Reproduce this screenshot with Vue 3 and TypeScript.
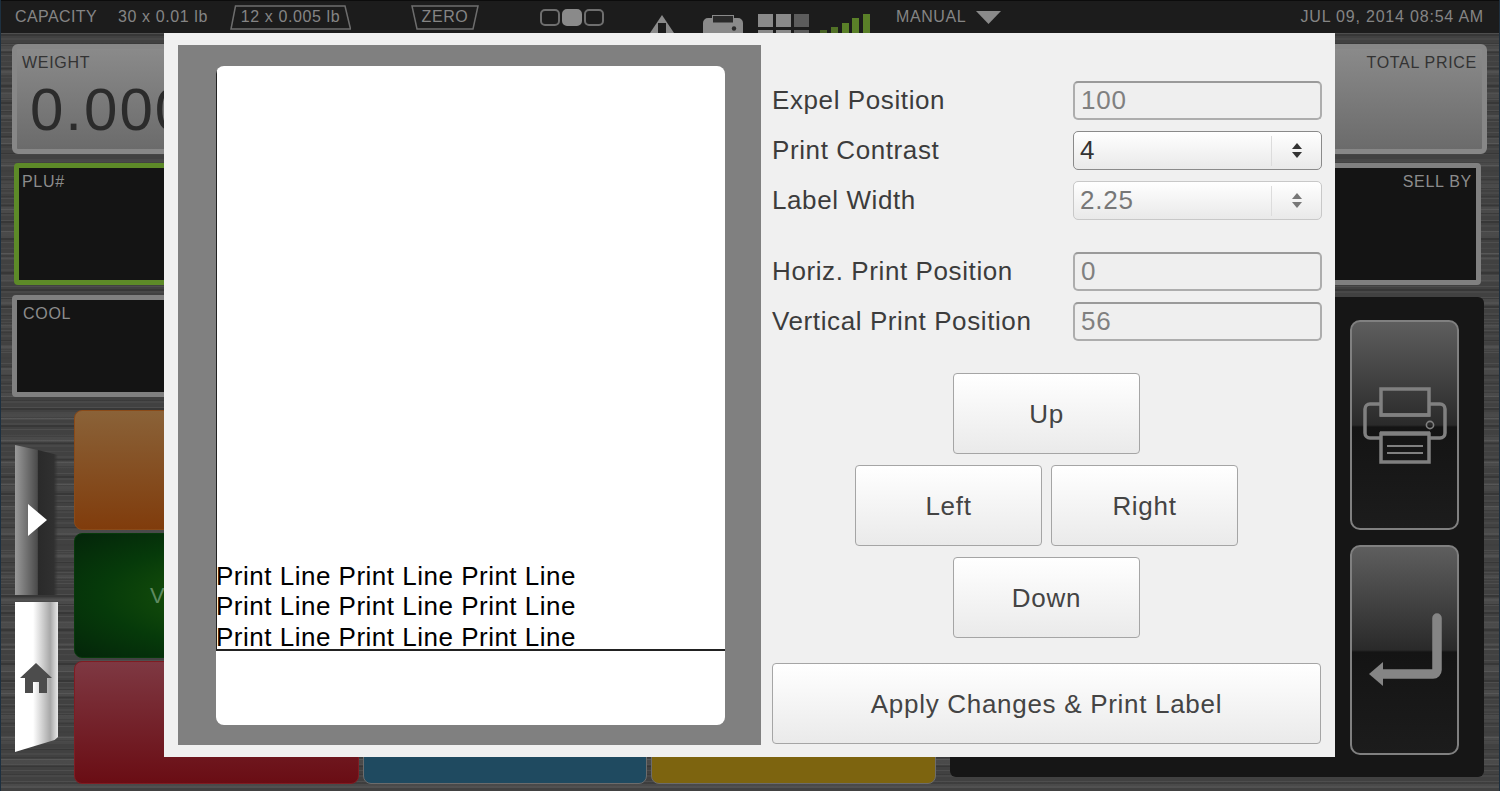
<script setup lang="ts">
const tiles = ['orange', 'plain', 'plain', 'green', 'plain', 'plain', 'red', 'blue', 'yellow']
</script>

<template>
  <div class="app">
    <header class="topbar">
      <span class="t capacity">CAPACITY</span>
      <span class="t range1">30 x 0.01 lb</span>
      <span class="trap range2">
        <svg class="trap-bg" viewBox="0 0 121 25" preserveAspectRatio="none"><polygon points="5.5,1 115,1 120.5,24 1,24" fill="none" stroke="#6d6d6d" stroke-width="1.5" /></svg>
        12 x 0.005 lb
      </span>
      <span class="trap zero">
        <svg class="trap-bg" viewBox="0 0 68 25" preserveAspectRatio="none"><polygon points="1,1 67,1 62,24 6,24" fill="none" stroke="#6d6d6d" stroke-width="1.5" /></svg>
        ZERO
      </span>
      <span class="segs"><i></i><i class="on"></i><i></i></span>
      <svg class="ic warn" width="24" height="18" viewBox="0 0 24 18"><polygon points="12,0 24,18 0,18" fill="#8a8a8a" /><rect x="8" y="8" width="8" height="10" fill="#1c1c1c" /></svg>
      <svg class="ic prn" width="40" height="19" viewBox="0 0 40 19"><path d="M5 4h4V1h22v3h4a5 5 0 0 1 5 5v10H0V9a5 5 0 0 1 5-5z" fill="#8a8a8a" /><rect x="9.5" y="1.5" width="21" height="7.5" fill="#2a2a2a" stroke="#8a8a8a" /><circle cx="31" cy="14.5" r="2.2" fill="#2a2a2a" /></svg>
      <span class="blocks"><i></i><i></i><i class="dim"></i></span>
      <svg class="ic sig" width="50" height="19" viewBox="0 0 50 19"><g fill="#5a8028"><rect x="0" y="16" width="7" height="3" opacity=".7" /><rect x="11" y="13" width="7" height="6" opacity=".85" /><rect x="22" y="9" width="7" height="10" /><rect x="32" y="4" width="7" height="15" /><rect x="43" y="0" width="7" height="19" /></g></svg>
      <span class="t manual">MANUAL</span>
      <svg class="caret" width="25" height="13" viewBox="0 0 25 13"><polygon points="0,0 25,0 12.5,13" fill="#8a8a8a" /></svg>
      <span class="t date">JUL 09, 2014 08:54 AM</span>
    </header>

    <main class="main">
      <section class="row r1">
        <div class="readout weight"><span class="cap">WEIGHT</span><span class="value">0.000</span></div>
        <div class="readout price"><span class="cap end">TOTAL PRICE</span></div>
      </section>
      <section class="row r2">
        <div class="well plu"><span class="cap light">PLU#</span></div>
        <div class="well sell"><span class="cap light end">SELL BY</span></div>
      </section>
      <section class="lower">
        <div class="left">
          <div class="well cool"><span class="cap light">COOL</span></div>
          <div class="pad">
            <div class="tabs">
              <div class="tab-arrow"><svg width="19" height="32" viewBox="0 0 19 32"><polygon points="0,0 19,16 0,32" fill="#fff" /></svg></div>
              <div class="tab-home"><svg width="34" height="30" viewBox="0 0 34 30"><path d="M17 0 33 15h-5v15h-8V19h-6v11H6V15H1z" fill="#4c4c4c" /></svg></div>
            </div>
            <div class="tiles">
              <div v-for="(t, i) in tiles" :key="i" class="tile" :class="t"><span v-if="t === 'green'" class="tile-name">V</span></div>
            </div>
          </div>
        </div>
        <aside class="side">
          <button class="act">
            <svg width="84" height="77" viewBox="0 0 84 77" fill="none" stroke="#808080"><rect x="18" y="2" width="48" height="26" stroke-width="3.5" /><path d="M17 17H7a5 5 0 0 0-5 5v24a5 5 0 0 0 5 5h10M67 17h10a5 5 0 0 1 5 5v24a5 5 0 0 1-5 5H67M17 28h50M17 46h50" stroke-width="3.5" /><rect x="18" y="47" width="48" height="28" stroke-width="3.5" /><path d="M24 59h36M24 66h36" stroke-width="2" /><circle cx="67" cy="38" r="3.6" stroke-width="1.6" /></svg>
          </button>
          <button class="act">
            <svg width="76" height="80" viewBox="0 0 76 80"><path d="M70 8v52a4 4 0 0 1-4 4H15" fill="none" stroke="#858585" stroke-width="9.5" stroke-linecap="round" /><polygon points="2,64 16,52 16,76" fill="#858585" /></svg>
          </button>
        </aside>
      </section>
    </main>

    <div class="modal">
      <div class="preview">
        <div class="label">
          <div class="print">
            <div>Print Line Print Line Print Line</div>
            <div>Print Line Print Line Print Line</div>
            <div>Print Line Print Line Print Line</div>
          </div>
        </div>
      </div>
      <div class="form">
        <div class="field"><label>Expel Position</label><div class="box off">100</div></div>
        <div class="field"><label>Print Contrast</label><div class="box spin"><span>4</span><b><i class="up"></i><i class="dn"></i></b></div></div>
        <div class="field"><label>Label Width</label><div class="box spin muted"><span>2.25</span><b><i class="up"></i><i class="dn"></i></b></div></div>
        <div class="field first"><label>Horiz. Print Position</label><div class="box off">0</div></div>
        <div class="field"><label>Vertical Print Position</label><div class="box off">56</div></div>
        <div class="nudge">
          <button class="btn">Up</button>
          <div class="mid"><button class="btn">Left</button><button class="btn">Right</button></div>
          <button class="btn">Down</button>
        </div>
        <button class="btn apply">Apply Changes &amp; Print Label</button>
      </div>
    </div>
  </div>
</template>

<style scoped>
* { box-sizing: border-box; }
.app {
  position: relative;
  width: 1500px;
  height: 791px;
  overflow: hidden;
  display: flex;
  flex-direction: column;
  font-family: "Liberation Sans", Arial, sans-serif;
  background:
    repeating-linear-gradient(180deg, rgba(255,255,255,.07) 0 1px, rgba(0,0,0,0) 1px 5px, rgba(255,255,255,.04) 5px 7px, rgba(0,0,0,0) 7px 11px),
    repeating-linear-gradient(180deg, rgba(0,0,0,.16) 0 2px, rgba(0,0,0,0) 2px 9px, rgba(0,0,0,.1) 9px 10px, rgba(0,0,0,0) 10px 17px),
    repeating-linear-gradient(180deg, rgba(255,255,255,.03) 0 6px, rgba(0,0,0,.05) 6px 23px),
    #444;
  border-left: 1px solid #1d3040;
  border-right: 1px solid #1d3040;
}
.topbar {
  height: 33px;
  flex: none;
  display: flex;
  align-items: center;
  background: #1c1c1c;
  border-top: 1px solid #0c0c0c;
  color: #858585;
  overflow: hidden;
  padding-left: 14px;
}
.t { font-size: 16px; white-space: nowrap; letter-spacing: .6px; }
.capacity { letter-spacing: .4px; }
.range1 { margin-left: 21px; }
.trap { position: relative; height: 25px; display: flex; align-items: center; justify-content: center; font-size: 16px; letter-spacing: .6px; flex: none; }
.trap-bg { position: absolute; inset: 0; width: 100%; height: 100%; }
.range2 { width: 121px; margin-left: 22px; }
.zero { width: 68px; margin-left: 60px; }
.segs { display: flex; gap: 2px; margin-left: 61px; }
.segs i { width: 20px; height: 17px; border: 2px solid #6e6e6e; border-radius: 5px; }
.segs i.on { background: #8a8a8a; border-color: #8a8a8a; }
.ic { align-self: flex-end; flex: none; }
.warn { margin-left: 46px; }
.prn { margin-left: 29px; }
.blocks { align-self: flex-end; display: flex; gap: 3px; margin-left: 15px; height: 19px; }
.blocks i { width: 15px; height: 13px; background: #8a8a8a; box-shadow: 0 16px 0 #8a8a8a; }
.blocks i.dim { background: #5c5c5c; box-shadow: 0 16px 0 #5c5c5c; }
.sig { margin-left: 11px; }
.manual { margin-left: 26px; }
.caret { margin-left: 10px; }
.date { margin-left: auto; margin-right: 15px; letter-spacing: .8px; }

.main { flex: 1; display: flex; flex-direction: column; padding: 11px 12px 0 11px; gap: 9px; }
.row { display: flex; justify-content: space-between; flex: none; }
.r1 { height: 110px; }
.r2 { height: 122px; padding: 0 6px 0 2px; }
.readout {
  width: 700px;
  border: 5px solid #878787;
  border-radius: 6px;
  background: linear-gradient(180deg, #8a8a8a, #6b6b6b);
  padding: 5px 5px;
  display: flex;
  flex-direction: column;
}
.cap { font-size: 16px; color: #333; letter-spacing: .7px; }
.cap.light { color: #8c8c8c; }
.end { align-self: flex-end; text-align: right; }
.value { font-size: 60px; color: #2b2b2b; line-height: 60px; margin: 8px 0 0 8px; letter-spacing: 2px; }
.well {
  width: 700px;
  background: #141414;
  border: 5px solid #808080;
  border-radius: 4px;
  padding: 5px 4px;
  display: flex;
  flex-direction: column;
}
.plu { border-color: #5d8a28; padding-left: 3px; }
.cool { padding-left: 6px; }
.lower { flex: 1; display: flex; justify-content: space-between; min-height: 0; margin-top: 1px; }
.left { width: 924px; display: flex; flex-direction: column; gap: 13px; }
.cool { width: 100%; height: 102px; flex: none; }
.pad { display: flex; flex: 1; }
.tabs { width: 43px; margin: 35px 16px 0 3px; flex: none; display: flex; flex-direction: column; gap: 7px; }
.tab-arrow {
  height: 150px;
  display: flex;
  align-items: center;
  padding-left: 13px;
  background: linear-gradient(90deg, #9a9a9a 0, #4b4b4b 52%, #2a2a2a 54%, #303030 90%, rgba(60,60,60,0) 100%);
  clip-path: polygon(0 0, 53% 5px, 100% 10px, 100% 100%, 0 100%);
}
.tab-home {
  height: 150px;
  display: flex;
  align-items: center;
  justify-content: center;
  padding: 2px 2px 0 0;
  background: linear-gradient(90deg, #fff 0, #fff 42%, #a8a8a8 82%, #e8e8e8 100%);
  clip-path: polygon(0 0, 100% 0, 100% 90%, 92% 92%, 0 100%);
}
.tiles {
  flex: 1;
  display: grid;
  grid-template-columns: repeat(3, 1fr);
  grid-template-rows: 120px 125px 123px;
  gap: 3px 4px;
}
.tile { border-radius: 8px; border: 1px solid #6c6c6c; background: #444; }
.orange { background: linear-gradient(180deg, #8a6238, #803c0c); border-color: #8a4a18; }
.green { background: radial-gradient(ellipse at 60% 50%, #1d5a0a, #063a0a 60%, #04250a); border-color: #063a0a; display: flex; align-items: center; padding-left: 75px; }
.tile-name { font-size: 22px; color: #5f8a60; }
.red { background: linear-gradient(180deg, #7e3842, #6a0d14); border-color: #801c22; }
.blue { background: #1f4a60; }
.yellow { background: #7d640f; }
.side {
  width: 534px;
  height: 480px;
  flex: none;
  margin-top: 2px;
  margin-right: 3px;
  background: #161616;
  border-radius: 6px;
  display: flex;
  flex-direction: column;
  align-items: flex-end;
  padding: 23px 25px 0 0;
  gap: 15px;
}
.act {
  width: 109px;
  height: 210px;
  padding: 0;
  border: 2px solid #808080;
  border-radius: 10px;
  background: linear-gradient(180deg, #5e5e5e 0, #2a2a2a 50%, #141414 51%, #1c1c1c 100%);
  display: flex;
  align-items: center;
  justify-content: center;
}

.modal {
  position: absolute;
  left: 163px;
  top: 33px;
  width: 1171px;
  height: 724px;
  background: #f0f0f0;
  display: flex;
  padding: 12px 14px;
}
.preview {
  width: 583px;
  height: 700px;
  flex: none;
  background: #808080;
  padding: 21px 36px 20px 38px;
}
.label { height: 100%; background: #fff; border-radius: 8px; overflow: hidden; }
.print {
  height: 585px;
  border-left: 1px solid #222;
  border-bottom: 2px solid #222;
  display: flex;
  flex-direction: column;
  justify-content: flex-end;
  font-size: 26px;
  letter-spacing: .5px;
  line-height: 30.4px;
  color: #000;
  white-space: nowrap;
}
.print div { text-indent: -1px; }
.print div:last-child { margin-bottom: -3px; }
.form { flex: 1; padding: 36px 0 0 11px; display: flex; flex-direction: column; }
.field { display: flex; align-items: center; justify-content: space-between; height: 39px; margin-bottom: 11px; }
.field.first { margin-top: 21px; }
.field label { font-size: 26px; letter-spacing: .6px; color: #3c3c3c; }
.box {
  width: 249px;
  height: 39px;
  border-radius: 5px;
  font-size: 26px;
  letter-spacing: .8px;
  display: flex;
  align-items: center;
  padding-left: 6px;
  margin-right: -1px;
}
.off { border: 2px solid #adadad; border-top-color: #9a9a9a; color: #808080; background: #efefef; }
.spin {
  border: 1.5px solid #8a8a8a;
  color: #333;
  background: linear-gradient(180deg, #fff, #e9e9e9);
  justify-content: space-between;
  padding-right: 0;
}
.spin b {
  width: 50px;
  height: 30px;
  border-left: 1px solid #dcdcdc;
  display: flex;
  flex-direction: column;
  align-items: center;
  justify-content: center;
  gap: 3px;
}
.up, .dn { width: 0; height: 0; border: 5.5px solid transparent; }
.up { border-top: 0; border-bottom: 6px solid #333; }
.dn { border-bottom: 0; border-top: 6px solid #333; }
.muted { border-color: #c8c8c8; color: #777; }
.muted .up { border-bottom-color: #777; }
.muted .dn { border-top-color: #777; }
.nudge { display: flex; flex-direction: column; align-items: center; gap: 11px; margin-top: 21px; }
.mid { display: flex; gap: 9px; }
.btn {
  width: 187px;
  height: 81px;
  font-family: inherit;
  font-size: 26px;
  letter-spacing: .7px;
  color: #444;
  border: 1px solid #a5a5a5;
  border-radius: 4px;
  background: linear-gradient(180deg, #fff, #eaeaea);
  padding: 2px 0 0;
}
.apply { width: 549px; margin-top: 25px; }
</style>
